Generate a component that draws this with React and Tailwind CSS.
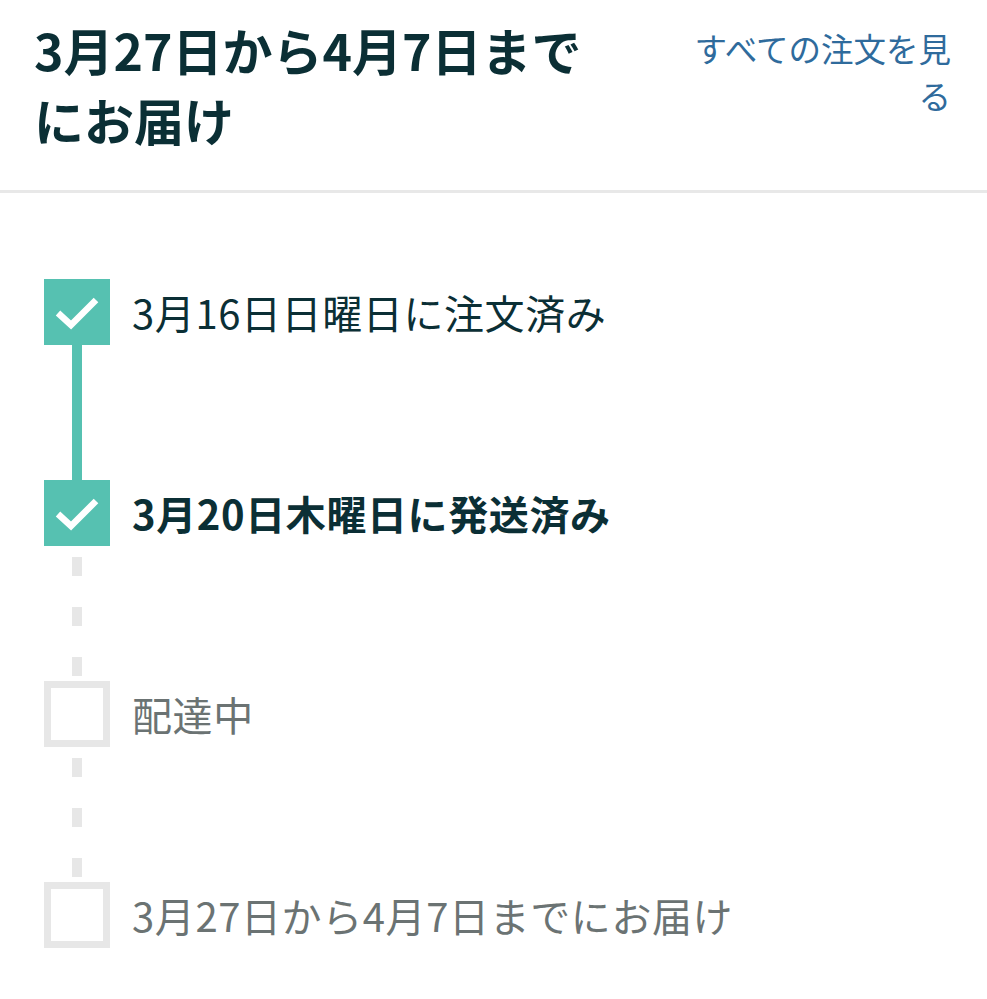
import React from "react";

const steps = [
  { label: "3月16日日曜日に注文済み", done: true },
  { label: "3月20日木曜日に発送済み", done: true, current: true },
  { label: "配達中", done: false },
  { label: "3月27日から4月7日までにお届け", done: false },
];

function CheckBox({ done }) {
  if (!done) {
    return <div className="w-[66px] h-[66px] shrink-0 border-[7px] border-[#e7e7e7] bg-white" />;
  }
  return (
    <div className="w-[66px] h-[66px] shrink-0 bg-[#56c1b1] flex items-center justify-center">
      <svg width="66" height="66" viewBox="0 0 66 66">
        <path d="M14 34 L27 46 L52 21" fill="none" stroke="white" strokeWidth="6.5" strokeLinecap="butt" strokeLinejoin="miter" />
      </svg>
    </div>
  );
}

function Connector({ solid }) {
  return (
    <div className="w-[66px] h-[135px] flex flex-col items-center">
      {solid ? (
        <div className="w-[10px] h-full bg-[#56c1b1]" />
      ) : (
        <div className="flex flex-col items-center pt-[11px] gap-[31px]">
          <div className="w-[10px] h-[19px] bg-[#e7e7e7]" />
          <div className="w-[10px] h-[19px] bg-[#e7e7e7]" />
          <div className="w-[10px] h-[19px] bg-[#e7e7e7]" />
        </div>
      )}
    </div>
  );
}

export default function App() {
  return (
    <div
      className="w-[987px] h-[999px] bg-white overflow-hidden"
      style={{ fontFamily: '"Noto Sans CJK JP", "Noto Sans", sans-serif' }}
    >
      {/* ヘッダー */}
      <div className="flex justify-between pl-[34px] pr-[36px] pt-[14px] pb-[36px] border-b-[3px] border-[#e8e8e8]">
        <h1 className="w-[590px] text-[50px] leading-[70px] font-bold text-[#0b2f35]">
          3月27日から4月7日までにお届け
        </h1>
        <a className="w-[270px] pt-[10px] text-right text-[32.5px] leading-[47px] text-[#2f6b9c]">
          すべての注文を見る
        </a>
      </div>

      {/* タイムライン */}
      <div className="pl-[44px] pt-[86px]">
        {steps.map((s, i) => (
          <React.Fragment key={i}>
            <div className="flex items-center h-[66px]">
              <CheckBox done={s.done} />
              <span
                className={
                  "ml-[22px] text-[40px] tracking-[0.6px] leading-none " +
                  (s.done ? "text-[#0b2f35] " : "text-[#6b7373] ") +
                  (s.current ? "font-bold" : "font-normal")
                }
              >
                {s.label}
              </span>
            </div>
            {i < steps.length - 1 && <Connector solid={steps[i + 1].done} />}
          </React.Fragment>
        ))}
      </div>
    </div>
  );
}
